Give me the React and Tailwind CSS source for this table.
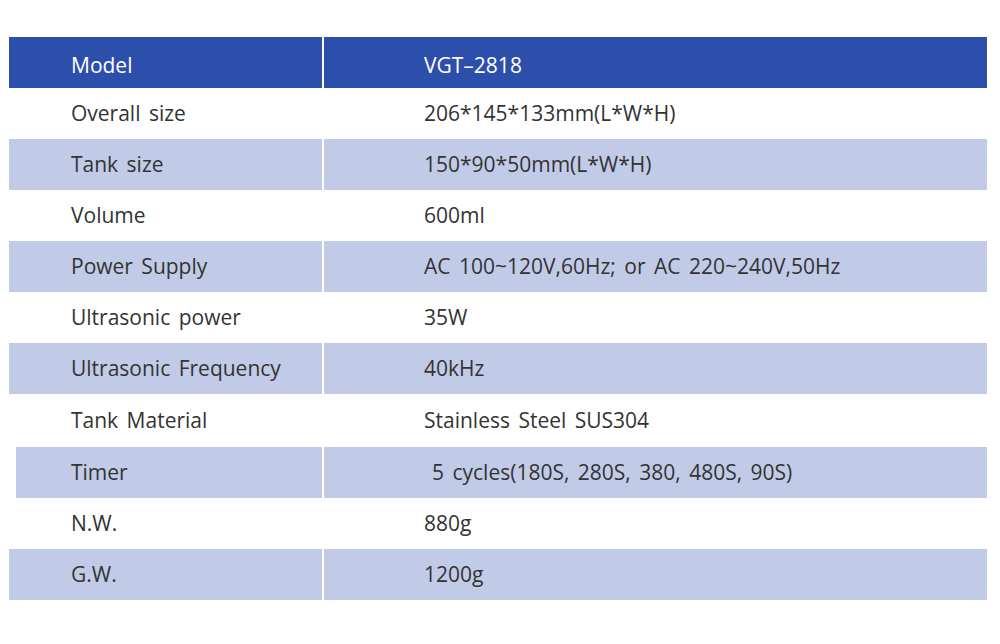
import React from "react";

const rows = [
  { label: "Overall size", value: "206*145*133mm(L*W*H)", shaded: false },
  { label: "Tank size", value: "150*90*50mm(L*W*H)", shaded: true },
  { label: "Volume", value: "600ml", shaded: false },
  { label: "Power Supply", value: "AC 100~120V,60Hz; or AC 220~240V,50Hz", shaded: true },
  { label: "Ultrasonic power", value: "35W", shaded: false },
  { label: "Ultrasonic Frequency", value: "40kHz", shaded: true },
  { label: "Tank Material", value: "Stainless Steel SUS304", shaded: false, tall: true },
  { label: "Timer", value: "5 cycles(180S, 280S, 380, 480S, 90S)", shaded: true, inset: true, valueShift: true },
  { label: "N.W.", value: "880g", shaded: false },
  { label: "G.W.", value: "1200g", shaded: true },
];

export default function App() {
  return (
    <div
      className="w-[1000px] h-[644px] bg-white pt-[37px] text-[#333333] text-[21px] [word-spacing:3px]"
      style={{ fontFamily: '"Open Sans", "Liberation Sans", sans-serif' }}
    >
      <div className="flex h-[51px] gap-[2px] text-white">
        <div className="ml-[9px] w-[313px] bg-[#2d4fac] flex items-center pl-[62px] pt-[6px]">
          Model
        </div>
        <div className="w-[663px] bg-[#2d4fac] flex items-center pl-[100px] pt-[6px]">
          VGT–2818
        </div>
      </div>
      {rows.map((r) => (
        <div
          key={r.label}
          className={`flex gap-[2px] ${r.tall ? "h-[53px]" : "h-[51px]"}`}
        >
          <div
            className={`${r.inset ? "ml-[16px] w-[306px] pl-[55px]" : "ml-[9px] w-[313px] pl-[62px]"} ${
              r.shaded ? "bg-[#c1cbe7]" : "bg-white"
            } flex items-center`}
          >
            {r.label}
          </div>
          <div
            className={`w-[663px] ${r.shaded ? "bg-[#c1cbe7]" : "bg-white"} flex items-center ${
              r.valueShift ? "pl-[108px]" : "pl-[100px]"
            }`}
          >
            {r.value}
          </div>
        </div>
      ))}
    </div>
  );
}
